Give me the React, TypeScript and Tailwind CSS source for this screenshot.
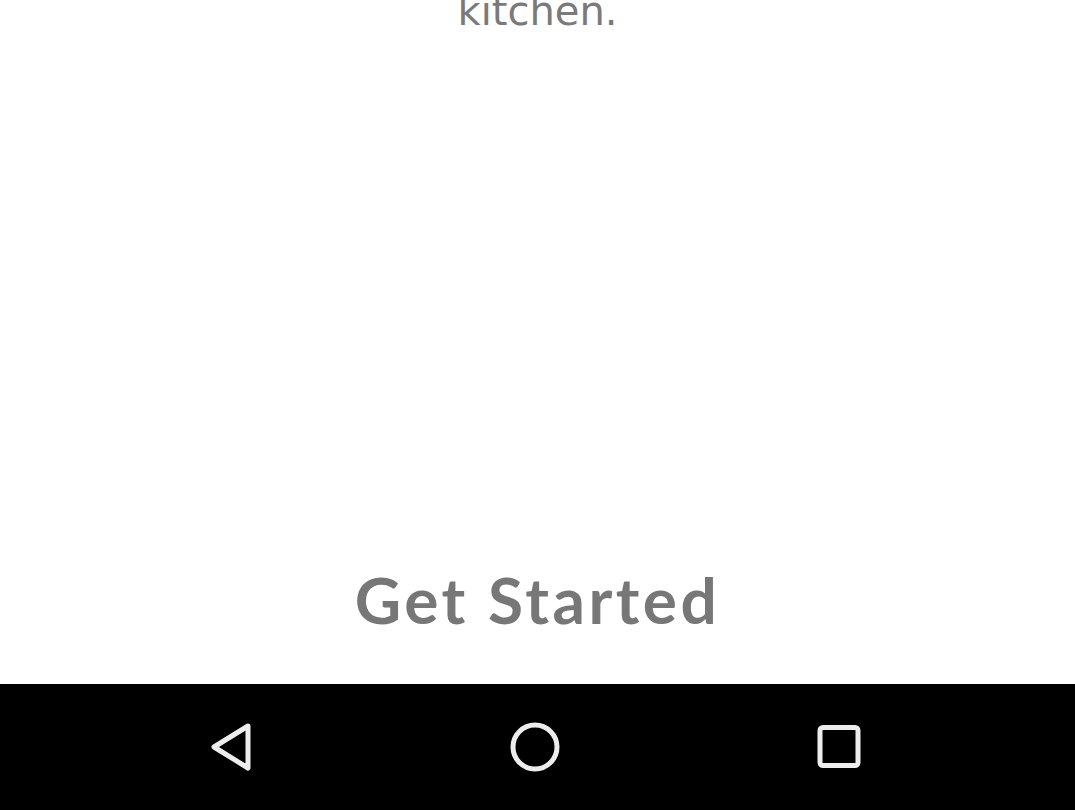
import React from "react"

function BackIcon() {
  return (
    <svg width="56" height="56" viewBox="0 0 56 56" fill="none">
      <path d="M45 7 L11 28 L45 49 Z" stroke="#ededed" strokeWidth="5" strokeLinejoin="round" />
    </svg>
  )
}

function HomeIcon() {
  return (
    <svg width="56" height="56" viewBox="0 0 56 56" fill="none">
      <circle cx="28" cy="28" r="22" stroke="#ededed" strokeWidth="5" />
    </svg>
  )
}

function RecentsIcon() {
  return (
    <svg width="56" height="56" viewBox="0 0 56 56" fill="none">
      <rect x="9" y="8.5" width="38" height="38" rx="3" stroke="#ededed" strokeWidth="5" />
    </svg>
  )
}

export default function App() {
  return (
    <div className="h-[810px] w-full bg-white flex flex-col overflow-hidden">
      {/* Onboarding content */}
      <div className="flex-1 flex flex-col items-center">
        <p className="-mt-[17px] text-[40px] leading-[56px] text-[#7a7a7a] font-['DejaVu_Sans',sans-serif]">
          kitchen.
        </p>
        <div className="flex-1" />
        <button className="mb-[44px] text-[64px] leading-[80px] font-bold tracking-[3.5px] text-[#777777] font-['Lato',sans-serif]">
          Get Started
        </button>
      </div>

      {/* Android navigation bar */}
      <div className="h-[126px] bg-black flex items-center justify-center gap-[248px] pr-[5px]">
        <BackIcon />
        <HomeIcon />
        <RecentsIcon />
      </div>
    </div>
  )
}
